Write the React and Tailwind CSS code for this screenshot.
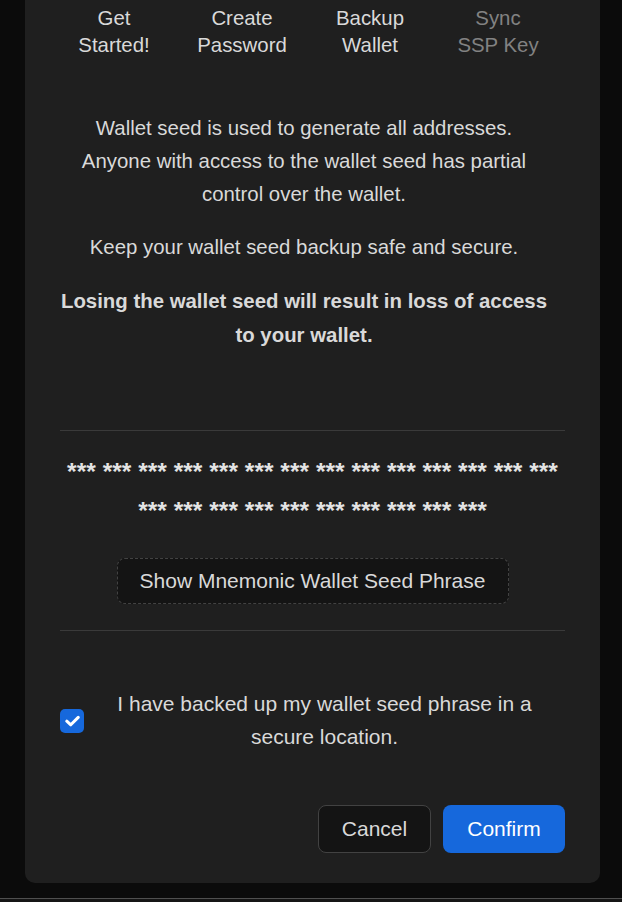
import React from "react";

const steps = [
  { label: ["Get", "Started!"], active: true },
  { label: ["Create", "Password"], active: true },
  { label: ["Backup", "Wallet"], active: true },
  { label: ["Sync", "SSP Key"], active: false },
];

const seedRow1 = Array(14).fill("***").join(" ");
const seedRow2 = Array(10).fill("***").join(" ");

const BackupWallet = () => {
  return (
    <div
      className="min-h-[902px] w-[622px] bg-[#0b0b0b] flex flex-col"
      style={{ fontFamily: '"Liberation Sans", Arial, sans-serif' }}
    >
      <div className="ml-[25px] w-[575px] bg-[#1f1f1f] rounded-b-[10px] px-[35px] pb-[30px] text-[20.4px] text-[#d9d9d9]">
        <div className="grid grid-cols-4 w-[512px] ml-[-10px] pt-[5px] leading-[27px] text-center">
          {steps.map((s) => (
            <div
              key={s.label[1]}
              className={s.active ? "text-[#d9d9d9]" : "text-[#828282]"}
            >
              {s.label[0]}
              <br />
              {s.label[1]}
            </div>
          ))}
        </div>

        <div className="mt-[53px] mr-[17px] text-center leading-[33px]">
          <p className="mb-[20px]">
            Wallet seed is used to generate all addresses.
            <br />
            Anyone with access to the wallet seed has partial
            <br />
            control over the wallet.
          </p>
          <p className="mb-[20px]">Keep your wallet seed backup safe and secure.</p>
          <p className="font-bold leading-[34px] mt-[1px] whitespace-nowrap">
            Losing the wallet seed will result in loss of access
            <br />
            to your wallet.
          </p>
        </div>

        <div className="mt-[78px] h-px bg-[#3a3a3a]" />

        <div className="mt-[21px] text-center font-bold text-[24.6px] leading-[39px] text-[#e3e3e3]">
          <div className="whitespace-nowrap">{seedRow1}</div>
          <div className="whitespace-nowrap">{seedRow2}</div>
        </div>

        <div className="mt-[28px] flex justify-center">
          <button className="h-[46px] w-[392px] rounded-[8px] border border-dashed border-[#424242] bg-[#141414] text-[21px] text-[#d9d9d9]">
            Show Mnemonic Wallet Seed Phrase
          </button>
        </div>

        <div className="mt-[26px] h-px bg-[#3a3a3a]" />

        <div className="mt-[56px] flex items-center">
          <span className="mt-[1px] flex h-[24px] w-[24px] shrink-0 items-center justify-center rounded-[5px] bg-[#1668dc]">
            <svg width="15" height="12" viewBox="0 0 15 12" fill="none">
              <path
                d="M1.8 6.2 L5.8 9.8 L13.2 2.4"
                stroke="white"
                strokeWidth="3"
                strokeLinecap="round"
                strokeLinejoin="round"
              />
            </svg>
          </span>
          <span className="flex-1 px-[8px] text-center leading-[33px] text-[21px]">
            I have backed up my wallet seed phrase in a
            <br />
            secure location.
          </span>
        </div>

        <div className="mt-[52px] flex justify-end gap-[12px]">
          <button className="h-[48px] w-[113px] rounded-[8px] border border-[#424242] bg-[#141414] text-[21px] text-[#d9d9d9]">
            Cancel
          </button>
          <button className="h-[48px] w-[122px] rounded-[8px] bg-[#1668dc] text-[21px] text-white">
            Confirm
          </button>
        </div>
      </div>
      <div className="mt-[15px] h-px bg-[#4f4f4f]" />
      <div className="flex-1 bg-[#151515]" />
    </div>
  );
};

export default function App() {
  return <BackupWallet />;
}
